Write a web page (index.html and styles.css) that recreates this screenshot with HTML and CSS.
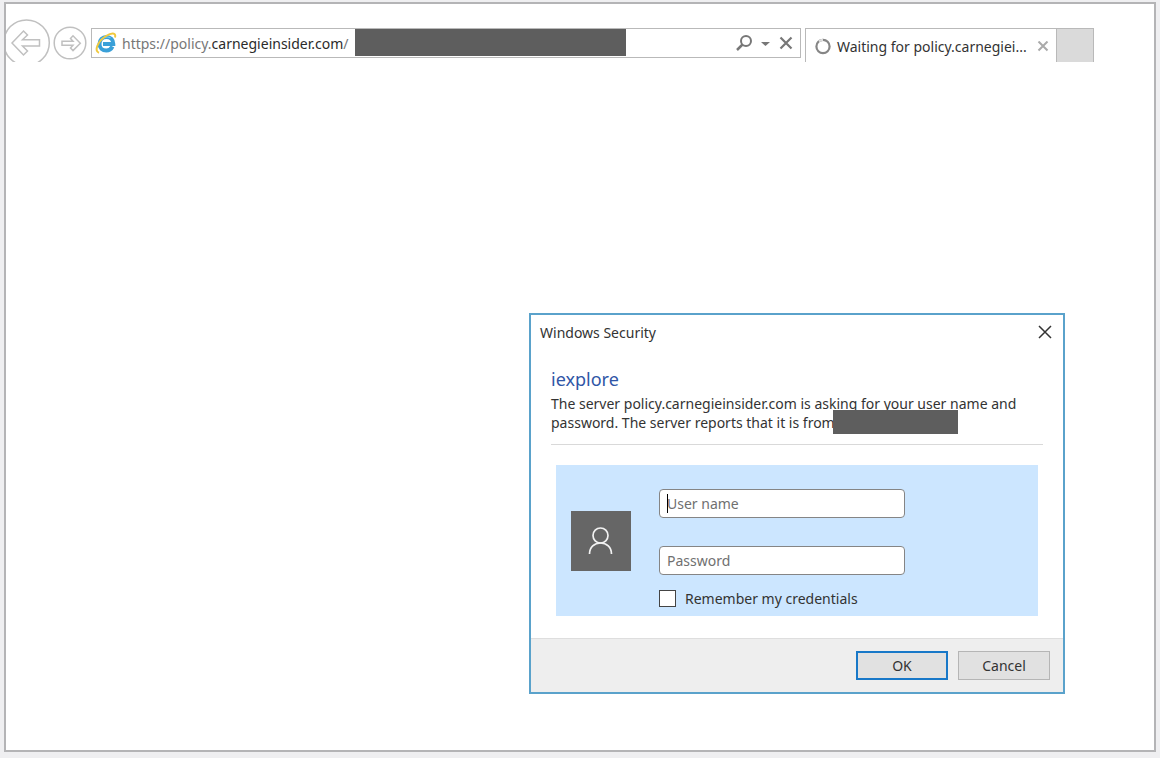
FILE: index.html
```html
<!DOCTYPE html>
<html lang="en">
<head>
<meta charset="utf-8">
<title>Windows Security</title>
<link rel="stylesheet" href="styles.css">
</head>
<body>
<main class="frame">
  <header class="toolbar">
    <button class="nav" type="button" aria-label="Back">
      <svg width="45" height="43" viewBox="6 19 45 43" fill="none" stroke="#c0c0c0" stroke-width="1.500"><circle cx="26.500" cy="42.700" r="22.800"/><path d="M12 43 23.500 31 27.500 35 22.500 39.800H39.500V46H22.500L27.500 51 23.500 55z"/></svg>
    </button>
    <button class="nav" type="button" aria-label="Forward">
      <svg width="34" height="43" viewBox="53 19 34 43" fill="none" stroke="#c0c0c0" stroke-width="1.500"><circle cx="70" cy="43" r="15.800"/><path d="M80.300 43.200 73 35.800 70.500 38.500 73 41.200H62V45.200H73L70.500 48 73 50.600z"/></svg>
    </button>
    <div class="address">
      <svg class="ie" width="22" height="22" viewBox="0 0 22 22" fill="none"><path d="M17.500 14.500C16 17.500 14 18.500 11.300 18.500 7.500 18.500 4.500 16 4.500 12S7.500 5 11.500 5 18.300 8 18.300 12H8" stroke="#3aa0d8" stroke-width="4"/><path d="M5 9.500C6.500 5.500 12 3.800 15.500 6" stroke="#7fd0f0" stroke-width="1.200"/><path d="M4 20.800C-1.500 19 3 9 11 4 16 .8 21.500 0 20 5.500" stroke="#f0c93e" stroke-width="2"/></svg>
      <span class="url">https://policy.<b>carnegieinsider.com</b>/</span>
      <span class="mask mask-url"></span>
      <div class="tools">
        <button class="tool" type="button" aria-label="Search"><svg width="18" height="18" viewBox="0 0 18 18" fill="none" stroke="#777" stroke-width="2"><circle cx="11" cy="7" r="5"/><path d="M7.500 10.500 2 16" stroke-width="2.500"/></svg></button>
        <button class="tool" type="button" aria-label="Show address list"><svg width="10" height="18" viewBox="0 0 10 18"><path d="M0 8h9L4.500 12z" fill="#777"/></svg></button>
        <button class="tool" type="button" aria-label="Stop"><svg width="14" height="18" viewBox="0 0 14 18" fill="none" stroke="#777" stroke-width="2.200"><path d="M1.500 3.500l11 11M12.500 3.500l-11 11"/></svg></button>
      </div>
    </div>
    <div class="tab">
      <svg width="18" height="18" viewBox="0 0 18 18" fill="none" stroke-width="2.200"><circle cx="9" cy="8.500" r="6.600" stroke="#868686"/><path d="M5 3.300A6.600 6.600 0 0 1 9 1.900" stroke="#dedede"/></svg>
      <span class="tab-title">Waiting for policy.carnegiei...</span>
      <button class="tool" type="button" aria-label="Close tab"><svg width="12" height="12" viewBox="0 0 12 12" stroke="#aaa" stroke-width="2"><path d="M1.500 .5l9 9M10.500 .5l-9 9"/></svg></button>
    </div>
    <button class="new-tab" type="button" aria-label="New tab"></button>
  </header>

  <form class="dialog" role="dialog" aria-labelledby="dialog-title">
    <div class="titlebar">
      <span id="dialog-title">Windows Security</span>
      <button class="tool" type="button" aria-label="Close"><svg width="14" height="14" viewBox="0 0 14 14" stroke="#333" stroke-width="1.500"><path d="M1 1l12 12M13 1 1 13"/></svg></button>
    </div>
    <div class="message">
      <h1>iexplore</h1>
      <p>The server policy.carnegieinsider.com is asking for your user name and<br>password. The server reports that it is from<span class="mask mask-realm"></span></p>
    </div>
    <div class="credentials">
      <div class="avatar"><svg width="26" height="30" viewBox="0 0 26 30" fill="none" stroke="#f2f2f2" stroke-width="1.700"><circle cx="12.500" cy="9.500" r="7.500"/><path d="M1.500 28C1.500 21 6.500 17 12.500 17s11 4 11 11"/></svg></div>
      <div class="fields">
        <div class="field"><input type="text" aria-label="User name" placeholder="User name"><span class="caret"></span></div>
        <div class="field"><input type="password" aria-label="Password" placeholder="Password"></div>
        <label class="remember"><input type="checkbox">Remember my credentials</label>
      </div>
    </div>
    <div class="actions">
      <button class="button primary" type="button">OK</button>
      <button class="button" type="button">Cancel</button>
    </div>
  </form>
</main>
</body>
</html>
```
FILE: styles.css
```css
* { box-sizing: border-box; }
body {
  margin: 0;
  min-height: 100vh;
  padding: 2px 4px 6px;
  display: flex;
  background: #efeff1;
  color: #333;
  font: 14px/19px "Noto Sans", "Open Sans", sans-serif;
}
button, input { font: inherit; color: inherit; }
svg { display: block; }
.frame {
  flex: 1;
  border: 2px solid #b4b4b6;
  background: #fff;
}
.toolbar {
  display: flex;
  height: 43px;
  margin: 15px 60px 0 0;
  overflow: hidden;
}
.nav, .tool { padding: 0; border: 0; background: none; flex: none; }
.nav { margin-right: 2px; }
.address {
  flex: 1;
  display: flex;
  align-items: center;
  height: 30px;
  margin: 9px 4px 0 2px;
  padding-left: 3px;
  border: 1px solid #b9b9b9;
}
.ie { flex: none; margin-right: 5px; }
.url { flex: none; min-width: 233px; color: #777; white-space: nowrap; }
.url b { font-weight: 400; color: #2b2b2b; }
.mask { background: #5e5e5e; }
.mask-url { width: 271px; height: 27px; align-self: flex-start; }
.tools { display: flex; align-items: center; gap: 8px; margin-left: auto; padding-right: 7px; }
.tab {
  display: flex;
  align-items: center;
  width: 252px;
  height: 34px;
  margin-top: 9px;
  padding: 2px 7px 0 8px;
  border: 1px solid #b9b9b9;
  border-bottom: 0;
}
.tab-title { margin: 0 auto 0 5px; white-space: nowrap; }
.new-tab {
  width: 37px;
  height: 34px;
  margin-top: 9px;
  padding: 0;
  border: solid #b9b9b9;
  border-width: 1px 1px 0 0;
  background: #dadada;
}
.dialog {
  width: 536px;
  margin: 251px 89px 0 auto;
  border: 2px solid #5aa2cb;
  background: #fff;
}
.titlebar {
  display: flex;
  align-items: center;
  justify-content: space-between;
  height: 34px;
  padding: 0 11px 0 9px;
}
.message { margin: 0 20px; padding: 18px 0 12px; border-bottom: 1px solid #d9d9d9; }
h1 { margin: 0 0 3px; font-size: 18px; line-height: 24px; font-weight: 400; color: #2f56a6; }
p { margin: 0; white-space: nowrap; }
.mask-realm {
  display: inline-block;
  width: 125px;
  height: 24px;
  margin: -6px 0 -2px -2px;
  vertical-align: middle;
}
.credentials {
  display: flex;
  gap: 28px;
  margin: 20px 25px 22px;
  padding: 24px 15px 8px;
  background: #cce6ff;
}
.avatar {
  display: grid;
  place-items: center;
  width: 60px;
  height: 60px;
  margin-top: 22px;
  background: #666;
}
.fields { width: 246px; }
.field { position: relative; margin-bottom: 28px; }
.field input {
  display: block;
  width: 100%;
  height: 29px;
  padding: 0 7px;
  border: 1px solid #858585;
  border-radius: 4px;
  background: #fff;
}
.field input::placeholder { color: #707070; opacity: 1; }
.field:nth-child(2) { margin-bottom: 14px; }
.caret { position: absolute; left: 8px; top: 5px; width: 1px; height: 19px; background: #000; }
.remember { display: flex; align-items: center; gap: 9px; white-space: nowrap; }
.remember input {
  appearance: none;
  width: 17px;
  height: 17px;
  margin: 0;
  border: 1px solid #444;
  background: #fff;
}
.actions {
  display: flex;
  justify-content: flex-end;
  gap: 10px;
  padding: 12px 13px;
  border-top: 1px solid #dedede;
  background: #eee;
}
.button { width: 92px; height: 29px; padding: 0; border: 1px solid #b5b5b5; background: #e1e1e1; }
.primary { border: 2px solid #1878c8; }
```
